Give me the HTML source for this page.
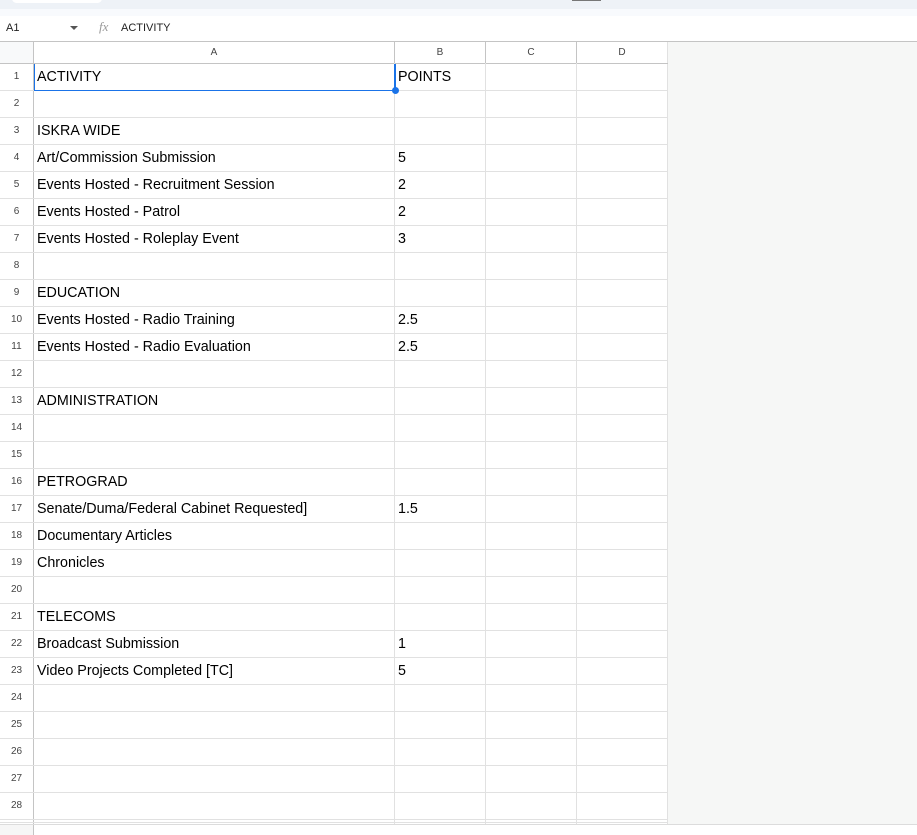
<!DOCTYPE html>
<html><head><meta charset="utf-8"><style>
*{margin:0;padding:0;box-sizing:border-box}
body{width:917px;height:835px;overflow:hidden;background:#fff;font-family:"Liberation Sans",Arial,sans-serif;position:relative}
.a{position:absolute}
.rn{position:absolute;left:0;width:33px;text-align:center;font-size:10px;color:#444;height:27px;line-height:28px}
.t{position:absolute;font-size:14.3px;color:#000;height:27px;line-height:28px;white-space:nowrap}
.hl{position:absolute;left:0;width:668px;height:1px;background:#e1e1e1}
.ch{position:absolute;top:41px;height:22px;line-height:23px;text-align:center;font-size:10px;color:#444}
</style></head><body>
<div class="a" style="left:0;top:0;width:917px;height:9px;background:#eef2f7"></div>
<div class="a" style="left:12px;top:-6px;width:90px;height:9px;background:#fff;border-radius:6px"></div>
<div class="a" style="left:572px;top:0;width:29px;height:1px;background:#777"></div>
<div class="a" style="left:0;top:9px;width:917px;height:7px;background:#f8fafd"></div>
<div class="a" style="left:6px;top:21px;font-size:11px;line-height:14px;color:#222">A1</div>
<div class="a" style="left:70px;top:26px;width:0;height:0;border-left:4px solid transparent;border-right:4px solid transparent;border-top:4px solid #555"></div>
<div class="a" style="left:99px;top:19px;font-size:13px;font-style:italic;color:#999;font-family:'Liberation Serif',serif">fx</div>
<div class="a" style="left:121px;top:21px;font-size:11px;line-height:14px;color:#222">ACTIVITY</div>
<div class="a" style="left:0;top:41px;width:917px;height:1px;background:#c4c4c4"></div>
<div class="a" style="left:0;top:42px;width:33px;height:21px;background:#f8f9fa"></div>
<div class="a" style="left:33px;top:42px;width:1px;height:21px;background:#c4c4c4"></div>
<div class="a" style="left:668px;top:42px;width:249px;height:782px;background:#f6f7f6"></div>
<div class="a" style="left:667px;top:42px;width:1px;height:782px;background:#e1e1e1"></div>
<div class="a" style="left:0;top:63px;width:668px;height:1px;background:#c4c4c4"></div>
<div class="ch" style="left:34px;width:360px">A</div>
<div class="ch" style="left:395px;width:90px">B</div>
<div class="ch" style="left:486px;width:90px">C</div>
<div class="ch" style="left:577px;width:90px">D</div>
<div class="a" style="left:394px;top:42px;width:1px;height:21px;background:#c4c4c4"></div>
<div class="a" style="left:485px;top:42px;width:1px;height:21px;background:#c4c4c4"></div>
<div class="a" style="left:576px;top:42px;width:1px;height:21px;background:#c4c4c4"></div>
<div class="a" style="left:33px;top:63px;width:1px;height:772px;background:#c4c4c4"></div>
<div class="a" style="left:394px;top:63px;width:1px;height:761px;background:#e1e1e1"></div>
<div class="a" style="left:485px;top:63px;width:1px;height:761px;background:#e1e1e1"></div>
<div class="a" style="left:576px;top:63px;width:1px;height:761px;background:#e1e1e1"></div>
<div id="g"></div>
<div class="a" style="left:0;top:824px;width:917px;height:1px;background:#dcdcdc"></div>
<div class="a" style="left:0;top:825px;width:33px;height:10px;background:#f6f6f6"></div>
<div class="a" style="left:34px;top:64px;width:360px;height:27px;border-bottom:1px solid #1a73e8;border-left:1px solid #1a73e8"></div>
<div class="a" style="left:394px;top:64px;width:2px;height:27px;background:#1a73e8"></div>
<div class="a" style="left:392px;top:87px;width:7px;height:7px;border-radius:50%;background:#1a73e8"></div>
<script>
var d=["ACTIVITY","","ISKRA WIDE","Art/Commission Submission","Events Hosted - Recruitment Session","Events Hosted - Patrol","Events Hosted - Roleplay Event","","EDUCATION","Events Hosted - Radio Training","Events Hosted - Radio Evaluation","","ADMINISTRATION","","","PETROGRAD","Senate/Duma/Federal Cabinet Requested]","Documentary Articles","Chronicles","","TELECOMS","Broadcast Submission","Video Projects Completed [TC]"];
var b={1:"POINTS",4:"5",5:"2",6:"2",7:"3",10:"2.5",11:"2.5",17:"1.5",22:"1",23:"5"};
var h="";
for(var i=1;i<=28;i++){var y=63+27*(i-1);
h+='<div class="rn" style="top:'+y+'px">'+i+'</div>';
h+='<div class="hl" style="top:'+(y+27)+'px"></div>';
if(d[i-1])h+='<div class="t" style="left:37px;top:'+y+'px">'+d[i-1]+'</div>';
if(b[i])h+='<div class="t" style="left:398px;top:'+y+'px">'+b[i]+'</div>';}
h+='<div class="hl" style="top:822px"></div>';
document.getElementById("g").innerHTML=h;
</script>
</body></html>
